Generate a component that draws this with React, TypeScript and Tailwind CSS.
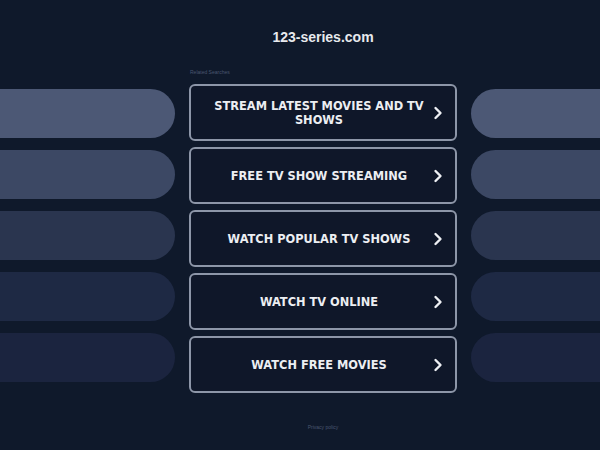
import React from "react";

const links = [
  "STREAM LATEST MOVIES AND TV SHOWS",
  "FREE TV SHOW STREAMING",
  "WATCH POPULAR TV SHOWS",
  "WATCH TV ONLINE",
  "WATCH FREE MOVIES",
];

const bars = ["bg-[#4c5875]", "bg-[#3c4864]", "bg-[#2a354f]", "bg-[#1e2944]", "bg-[#1b243f]"];

function Chevron() {
  return (
    <svg width="10" height="14" viewBox="0 0 10 14" fill="none" className="shrink-0">
      <path d="M2.5 2 L7.5 7 L2.5 12" stroke="#eef0f4" strokeWidth="2.4" strokeLinecap="round" strokeLinejoin="round" />
    </svg>
  );
}

function SideBars({ side }: { side: "left" | "right" }) {
  return (
    <div className="flex flex-col gap-[12px] pt-[89px]">
      {bars.map((c, i) => (
        <div
          key={i}
          className={`h-[49px] ${c} ${side === "left" ? "rounded-r-[25px]" : "rounded-l-[25px]"}`}
        />
      ))}
    </div>
  );
}

export default function App() {
  return (
    <div className="w-[600px] h-[450px] overflow-hidden bg-[#0f192b]" style={{ fontFamily: "'DejaVu Sans', Verdana, sans-serif" }}>
      <div className="w-[646px] grid grid-cols-[175px_268px_175px] gap-x-[14px]">
        <SideBars side="left" />
        <div className="flex flex-col items-stretch">
          <div
            className="h-[68px] pt-[28px] text-center text-[14px] leading-[18px] font-bold text-[#e8eaee]"
            style={{ fontFamily: "'Liberation Sans', Arial, sans-serif" }}
          >
            123-series.com
          </div>
          <div className="h-[16px] pl-[1px] text-[5px] leading-[8px] text-[#4a5670]" style={{ fontFamily: "'Liberation Sans', Arial, sans-serif" }}>
            Related Searches
          </div>
          <div className="flex flex-col gap-[6px]">
            {links.map((t) => (
              <div
                key={t}
                className="h-[57px] rounded-[6px] border-2 border-[#8d96a8] bg-[#0f1729] flex items-center pl-[14px] pr-[12px]"
              >
                <div className="flex-1 text-center text-[11.4px] leading-[14px] font-bold text-[#eceef2]">
                  {t}
                </div>
                <Chevron />
              </div>
            ))}
          </div>
          <div
            className="mt-[31px] text-center text-[5px] text-[#4a5670]"
            style={{ fontFamily: "'Liberation Sans', Arial, sans-serif" }}
          >
            Privacy policy
          </div>
        </div>
        <SideBars side="right" />
      </div>
    </div>
  );
}
